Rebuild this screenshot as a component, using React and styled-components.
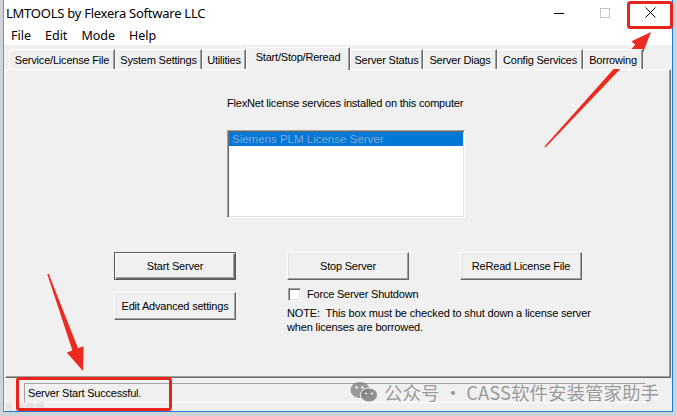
import React from 'react';
import styled, { createGlobalStyle } from 'styled-components';

const UI = `"Liberation Sans", Arial, sans-serif`;
const SEGOE = `"Noto Sans", "Open Sans", sans-serif`;

const Global = createGlobalStyle`
  html, body { margin: 0; padding: 0; }
  body { width: 677px; height: 416px; overflow: hidden; background: #d4d7db; }
  * { box-sizing: border-box; }
`;

const Desktop = styled.div`
  position: relative;
  width: 677px;
  height: 416px;
  background: #cfd3d8;
  overflow: hidden;
`;

const Window = styled.div`
  margin-left: 3px;
  width: 670px;
  height: 412px;
  border-left: 1px solid #8f8f8f;
  border-right: 1px solid #1f7bcf;
  border-bottom: 1px solid #1f7bcf;
  background: #f0f0f0;
  display: flex;
  flex-direction: column;
`;

const TitleBar = styled.div`
  height: 25px;
  background: #fff;
  display: flex;
  align-items: stretch;
`;

const Title = styled.div`
  flex: 1;
  display: flex;
  align-items: center;
  padding-left: 2px;
  font: 13px ${SEGOE};
  letter-spacing: -0.25px;
  color: #000;
  white-space: nowrap;
`;

const Controls = styled.div`
  display: flex;
`;

const ControlButton = styled.div`
  width: ${(p) => p.$w}px;
  display: flex;
  align-items: center;
  justify-content: center;
`;

const MenuBar = styled.div`
  height: 20px;
  background: #fff;
  display: flex;
  align-items: center;
  padding-left: 0;
`;

const MenuItem = styled.div`
  padding: 0 7px;
  font: 12.5px ${SEGOE};
  color: #000;
`;

const Body = styled.div`
  flex: 1;
  display: flex;
  flex-direction: column;
  padding: 2px 0 0 1px;
`;

const TabStrip = styled.div`
  display: flex;
  align-items: flex-end;
  height: 22px;
  padding-left: 4px;
`;

const Tab = styled.div`
  position: relative;
  width: ${(p) => p.$w}px;
  height: ${(p) => (p.$active ? 23 : 20)}px;
  margin-bottom: ${(p) => (p.$active ? -1 : 0)}px;
  z-index: ${(p) => (p.$active ? 2 : 1)};
  background: #f0f0f0;
  border-top: 1px solid #fff;
  border-left: 1px solid #fff;
  border-right: 1px solid #696969;
  box-shadow: inset -1px 0 #a0a0a0;
  display: flex;
  align-items: ${(p) => (p.$active ? 'flex-start' : 'center')};
  padding-top: ${(p) => (p.$active ? 3 : 1)}px;
  justify-content: center;
  font: 11px ${UI};
  letter-spacing: -0.2px;
  color: #000;
  white-space: nowrap;
  overflow: hidden;
`;

const Panel = styled.div`
  width: 666px;
  height: 309px;
  border-top: 1px solid #fff;
  border-left: 1px solid #fff;
  border-right: 1px solid #696969;
  border-bottom: 1px solid #696969;
  box-shadow: inset -1px -1px #a0a0a0;
  display: flex;
  flex-direction: column;
  padding-top: 27px;
`;

const Caption = styled.div`
  margin-left: 221px;
  font: 11px/13px ${UI};
  letter-spacing: -0.2px;
  color: #000;
  white-space: nowrap;
`;

const ListBox = styled.div`
  margin: 20px 0 0 221px;
  width: 238px;
  height: 88px;
  background: #fff;
  border-top: 1px solid #a0a0a0;
  border-left: 1px solid #a0a0a0;
  border-right: 1px solid #fff;
  border-bottom: 1px solid #fff;
  box-shadow: inset 1px 1px #696969, inset -1px -1px #e3e3e3;
  padding: 1px 1px 0 1px;
`;

const ListRow = styled.div`
  height: 14px;
  padding-left: 3px;
  background: ${(p) => (p.$selected ? '#0078d7' : 'transparent')};
  color: ${(p) => (p.$selected ? '#86a7cf' : '#000')};
  font: 11.5px/14px ${UI};
  white-space: nowrap;
`;

const ActionGrid = styled.div`
  margin: 34px 0 0 108px;
  display: grid;
  grid-template-columns: repeat(3, 122px);
  column-gap: 51px;
  row-gap: 6px;
  align-items: start;
`;

const Button = styled.div`
  height: 28px;
  margin-top: ${(p) => p.$offset || 0}px;
  background: #f0f0f0;
  display: flex;
  align-items: center;
  justify-content: center;
  font: 11px ${UI};
  letter-spacing: -0.2px;
  color: #000;
  white-space: nowrap;
  border: 1px solid;
  border-color: ${(p) => (p.$default ? '#5a5a5a' : '#fff #696969 #696969 #fff')};
  box-shadow: ${(p) =>
    p.$default
      ? 'inset 1px 1px #fff, inset -1px -1px #696969, inset -2px -2px #a0a0a0'
      : 'inset -1px -1px #a0a0a0, inset 1px 1px #e3e3e3'};
`;

const Options = styled.div`
  grid-column: 2 / span 2;
  display: flex;
  flex-direction: column;
`;

const OptionRow = styled.div`
  display: flex;
  align-items: center;
  gap: 6px;
  height: 16px;
  padding-left: 1px;
  font: 11px ${UI};
  letter-spacing: -0.2px;
  color: #000;
`;

const CheckBox = styled.span`
  width: 13px;
  height: 13px;
  background: #fff;
  border-top: 1px solid #a0a0a0;
  border-left: 1px solid #a0a0a0;
  border-right: 1px solid #fff;
  border-bottom: 1px solid #fff;
  box-shadow: inset 1px 1px #696969, inset -1px -1px #e3e3e3;
`;

const Note = styled.div`
  margin-top: 4px;
  font: 11px/14px ${UI};
  letter-spacing: -0.15px;
  color: #000;
  white-space: nowrap;
`;

const StatusField = styled.div`
  margin: 5px 0 0 19px;
  width: 622px;
  height: 20px;
  border-top: 1px solid #a0a0a0;
  border-left: 1px solid #a0a0a0;
  border-right: 1px solid #fff;
  border-bottom: 1px solid #fff;
  padding-left: 3px;
  font: 11px/18px ${UI};
  letter-spacing: -0.2px;
  color: #000;
  white-space: nowrap;
`;

const Overlay = styled.svg`
  position: absolute;
  left: 0;
  top: 0;
  pointer-events: none;
`;

const Watermark = styled.div`
  position: absolute;
  left: 350px;
  top: 379px;
  display: flex;
  align-items: center;
  gap: 6px;
  font: 18.5px "Noto Sans CJK SC", "Noto Sans", sans-serif;
  color: rgba(120, 120, 120, 0.72);
  white-space: nowrap;
  pointer-events: none;
`;

const Faint = styled.div`
  position: absolute;
  left: 6px;
  top: 402px;
  font: 9px/10px "Noto Sans CJK SC", sans-serif;
  color: rgba(255, 255, 255, 0.7);
  text-shadow: 0 0 1px rgba(0, 0, 0, 0.3);
  letter-spacing: 1px;
  pointer-events: none;
`;

const tabs = [
  ['Service/License File', 106],
  ['System Settings', 87],
  ['Utilities', 44],
  ['Start/Stop/Reread', 104, true],
  ['Server Status', 73],
  ['Server Diags', 74],
  ['Config Services', 86],
  ['Borrowing', 60],
];

const arrowRight = '651,32 643.3,52.1 639.6,48.7 545.5,147.5 544.5,146.5 635.2,44.7 631.5,41.3';
const arrowLeft = '83,371 66.8,352.6 72.4,350.5 47.3,274.2 48.7,273.8 78,348.3 83.6,346.2';

export default function App() {
  return (
    <Desktop>
      <Global />
      <Window>
        <TitleBar>
          <Title>LMTOOLS by Flexera Software LLC</Title>
          <Controls>
            <ControlButton $w={46}>
              <svg width="10" height="10" viewBox="0 0 10 10">
                <line x1="0" y1="5.5" x2="10" y2="5.5" stroke="#000" strokeWidth="1" />
              </svg>
            </ControlButton>
            <ControlButton $w={46}>
              <svg width="10" height="10" viewBox="0 0 10 10">
                <rect x="0.5" y="0.5" width="9" height="9" fill="none" stroke="#c4c4c4" strokeWidth="1" />
              </svg>
            </ControlButton>
            <ControlButton $w={44}>
              <svg width="11" height="11" viewBox="0 0 11 11">
                <path d="M0.5 0.5 L10.5 10.5 M10.5 0.5 L0.5 10.5" stroke="#000" strokeWidth="1" />
              </svg>
            </ControlButton>
          </Controls>
        </TitleBar>
        <MenuBar>
          <MenuItem>File</MenuItem>
          <MenuItem>Edit</MenuItem>
          <MenuItem>Mode</MenuItem>
          <MenuItem>Help</MenuItem>
        </MenuBar>
        <Body>
          <TabStrip>
            {tabs.map(([label, w, active]) => (
              <Tab key={label} $w={w} $active={active}>
                {label}
              </Tab>
            ))}
          </TabStrip>
          <Panel>
            <Caption>FlexNet license services installed on this computer</Caption>
            <ListBox>
              <ListRow $selected>Siemens PLM License Server</ListRow>
            </ListBox>
            <ActionGrid>
              <Button $default>Start Server</Button>
              <Button>Stop Server</Button>
              <Button>ReRead License File</Button>
              <Button $offset={6}>Edit Advanced settings</Button>
              <Options>
                <OptionRow>
                  <CheckBox />
                  Force Server Shutdown
                </OptionRow>
                <Note>
                  NOTE:&nbsp; This box must be checked to shut down a license server
                  <br />
                  when licenses are borrowed.
                </Note>
              </Options>
            </ActionGrid>
          </Panel>
          <StatusField>Server Start Successful.</StatusField>
        </Body>
      </Window>

      <Faint>К 大数据</Faint>
      <Watermark>
        <svg width="28" height="22" viewBox="0 0 28 22">
          <ellipse cx="10" cy="9" rx="9.5" ry="8" fill="rgba(125,125,125,0.75)" />
          <ellipse cx="19" cy="14" rx="8.5" ry="7" fill="rgba(125,125,125,0.85)" stroke="#f0f0f0" strokeWidth="1" />
          <circle cx="6.5" cy="6.5" r="1.3" fill="#f0f0f0" />
          <circle cx="12.5" cy="6.5" r="1.3" fill="#f0f0f0" />
          <circle cx="16" cy="12.5" r="1.1" fill="#f0f0f0" />
          <circle cx="22" cy="12.5" r="1.1" fill="#f0f0f0" />
        </svg>
        <span>公众号 · CASS软件安装管家助手</span>
      </Watermark>

      <Overlay width="677" height="416" viewBox="0 0 677 416">
        <rect x="628.5" y="2.5" width="43" height="25" rx="2" fill="none" stroke="#e8221d" strokeWidth="3" />
        <rect x="17.5" y="378.5" width="153" height="31" rx="2" fill="none" stroke="#e8221d" strokeWidth="3" />
        <polygon points={arrowRight} fill="#ec2a21" />
        <polygon points={arrowLeft} fill="#ec2a21" />
      </Overlay>
    </Desktop>
  );
}
